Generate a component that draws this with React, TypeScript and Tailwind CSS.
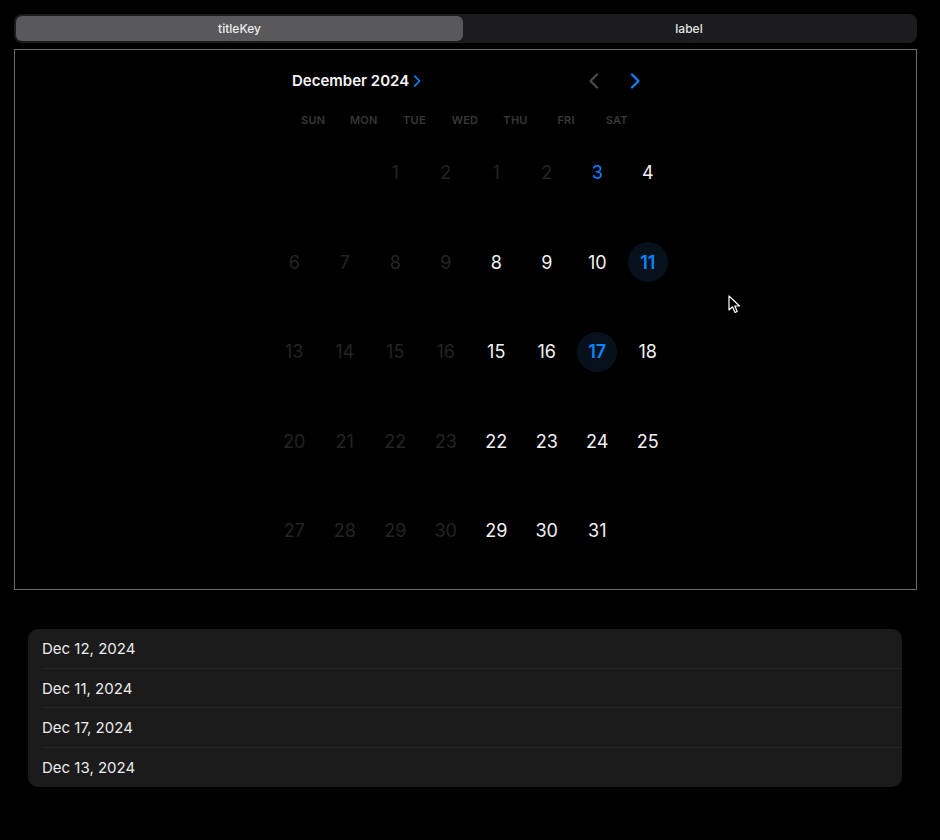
import React from 'react';

type Day = { n?: number; tone?: 'dim' | 'on' | 'blue' | 'sel' };

const weekDays = ['SUN', 'MON', 'TUE', 'WED', 'THU', 'FRI', 'SAT'];

const d = (n: number, tone: Day['tone']): Day => ({ n, tone });

const rows: Day[][] = [
  [{}, {}, d(1, 'dim'), d(2, 'dim'), d(1, 'dim'), d(2, 'dim'), d(3, 'blue'), d(4, 'on')],
  [d(6, 'dim'), d(7, 'dim'), d(8, 'dim'), d(9, 'dim'), d(8, 'on'), d(9, 'on'), d(10, 'on'), d(11, 'sel')],
  [d(13, 'dim'), d(14, 'dim'), d(15, 'dim'), d(16, 'dim'), d(15, 'on'), d(16, 'on'), d(17, 'sel'), d(18, 'on')],
  [d(20, 'dim'), d(21, 'dim'), d(22, 'dim'), d(23, 'dim'), d(22, 'on'), d(23, 'on'), d(24, 'on'), d(25, 'on')],
  [d(27, 'dim'), d(28, 'dim'), d(29, 'dim'), d(30, 'dim'), d(29, 'on'), d(30, 'on'), d(31, 'on'), {}],
];

const dates = ['Dec 12, 2024', 'Dec 11, 2024', 'Dec 17, 2024', 'Dec 13, 2024'];

function Chevron({ dir, className }: { dir: 'left' | 'right'; className?: string }) {
  return (
    <svg width="10" height="16" viewBox="0 0 10 16" fill="none" className={className}>
      <path
        d={dir === 'right' ? 'M2 1.5 L8.5 8 L2 14.5' : 'M8 1.5 L1.5 8 L8 14.5'}
        stroke="currentColor"
        strokeWidth="2.2"
        strokeLinecap="round"
        strokeLinejoin="round"
      />
    </svg>
  );
}

function DayCell({ day }: { day: Day }) {
  if (!day.n) return <div />;
  const tone =
    day.tone === 'dim'
      ? 'text-[#242424]'
      : day.tone === 'blue'
      ? 'text-[#0a84ff]'
      : day.tone === 'sel'
      ? 'text-[#0a84ff] font-semibold'
      : 'text-[#f2f2f2]';
  return (
    <div
      className={
        'w-10 h-10 rounded-full flex items-center justify-center text-[18px] ' +
        tone +
        (day.tone === 'sel' ? ' bg-[#06111c]' : '')
      }
    >
      {day.n}
    </div>
  );
}

export default function App() {
  return (
    <div className="min-h-[840px] w-[940px] bg-black relative" style={{ fontFamily: 'Inter, "Noto Sans", sans-serif' }}>
      <div className="pt-[14px] px-[14px] w-[931px]">
        {/* segmented control */}
        <div className="h-[29px] rounded-lg bg-[#1c1c1e] p-[2px] flex">
          <div className="w-[447px] rounded-md bg-[#59595c] flex items-center justify-center text-[12px] font-medium text-[#ececec]">
            titleKey
          </div>
          <div className="flex-1 flex items-center justify-center text-[12px] font-medium text-[#e5e5e5]">label</div>
        </div>

        {/* calendar frame */}
        <div className="mt-[6px] h-[541px] w-[903px] border border-[#6a6a6a]">
          <div className="pt-[21px] h-[20px] box-content flex items-center">
            <div className="ml-[277px] flex items-center gap-[4px]">
              <span className="text-[15px] font-semibold text-[#f5f5f5] leading-5">December 2024</span>
              <Chevron dir="right" className="w-[8px] h-[12px] text-[#0a84ff]" />
            </div>
            <div className="ml-[168px] flex items-center gap-[31px]">
              <Chevron dir="left" className="text-[#4a4a4a]" />
              <Chevron dir="right" className="text-[#0a84ff]" />
            </div>
          </div>

          <div className="mt-[21px] ml-[273px] w-[354px] grid grid-cols-7 h-4 items-center">
            {weekDays.map((w) => (
              <div key={w} className="text-center text-[11px] font-semibold text-[#383838] tracking-wide">
                {w}
              </div>
            ))}
          </div>

          <div className="ml-[254px] w-[404px] grid grid-cols-8">
            {rows.map((r, i) => (
              <React.Fragment key={i}>
                {r.map((day, j) => (
                  <div key={j} className="h-[89.5px] flex items-center justify-center">
                    <DayCell day={day} />
                  </div>
                ))}
              </React.Fragment>
            ))}
          </div>
        </div>
      </div>

      {/* selected dates list */}
      <div className="mt-[39px] ml-[28px] w-[874px] rounded-[10px] bg-[#1b1b1b] overflow-hidden">
        {dates.map((t, i) => (
          <div key={t} className="pl-[14px]">
            <div
              className={
                'h-[39.5px] pt-[2px] flex items-center text-[15px] text-[#ebebeb] ' +
                (i < dates.length - 1 ? 'border-b border-[#262626]' : '')
              }
            >
              {t}
            </div>
          </div>
        ))}
      </div>

      {/* mouse pointer */}
      <svg className="absolute left-[728px] top-[295px]" width="14" height="20" viewBox="0 0 14 20">
        <path d="M1 1 L1 15 L4.5 11.8 L7 17.5 L9.2 16.5 L6.8 11 L11.5 11 Z" fill="#000" stroke="#fff" strokeWidth="1.2" strokeLinejoin="round" />
      </svg>
    </div>
  );
}
